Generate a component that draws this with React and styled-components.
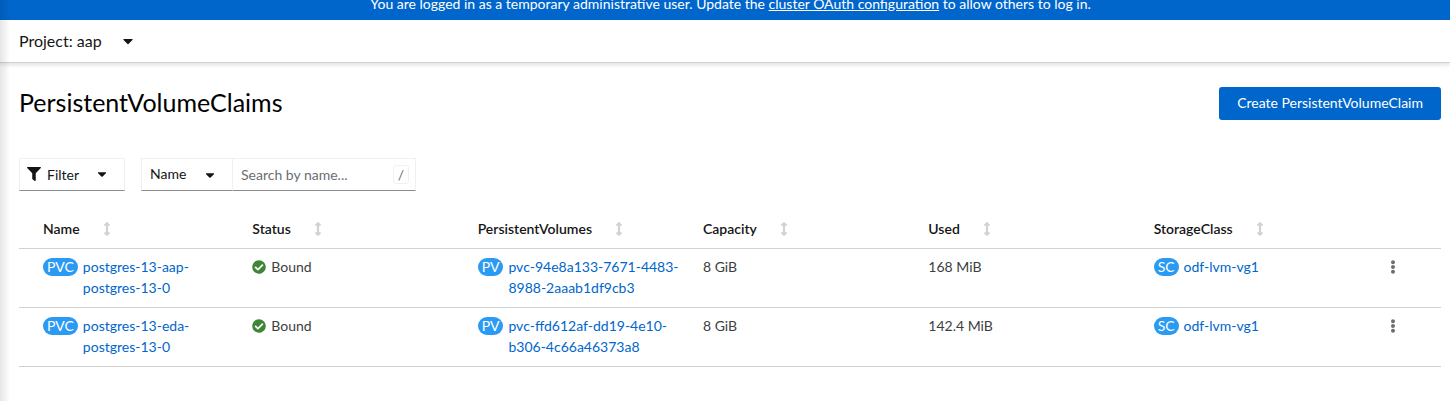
import styled, { createGlobalStyle } from "styled-components";
import {
  FaArrowsAltV,
  FaCaretDown,
  FaCheckCircle,
  FaEllipsisV,
  FaFilter,
} from "react-icons/fa";

const columns = [
  "Name",
  "Status",
  "PersistentVolumes",
  "Capacity",
  "Used",
  "StorageClass",
];

const claims = [
  {
    name: "postgres-13-aap-postgres-13-0",
    status: "Bound",
    volume: "pvc-94e8a133-7671-4483-8988-2aaab1df9cb3",
    capacity: "8 GiB",
    used: "168 MiB",
    storageClass: "odf-lvm-vg1",
  },
  {
    name: "postgres-13-eda-postgres-13-0",
    status: "Bound",
    volume: "pvc-ffd612af-dd19-4e10-b306-4c66a46373a8",
    capacity: "8 GiB",
    used: "142.4 MiB",
    storageClass: "odf-lvm-vg1",
  },
];

const ResourceLink = ({ kind, name }) => (
  <Resource>
    <Badge>{kind}</Badge>
    <a href="#">{name}</a>
  </Resource>
);

const ClaimRow = ({ claim }) => (
  <tr>
    <Td>
      <ResourceLink kind="PVC" name={claim.name} />
    </Td>
    <Td>
      <Status>
        <FaCheckCircle size={14} color="#3e8635" />
        {claim.status}
      </Status>
    </Td>
    <Td>
      <ResourceLink kind="PV" name={claim.volume} />
    </Td>
    <Td>{claim.capacity}</Td>
    <Td>{claim.used}</Td>
    <Td>
      <ResourceLink kind="SC" name={claim.storageClass} />
    </Td>
    <Td>
      <Kebab type="button" aria-label={`Actions for ${claim.name}`}>
        <FaEllipsisV size={14} />
      </Kebab>
    </Td>
  </tr>
);

const App = () => {
  return (
    <Page>
      <GlobalStyle />
      <Banner>
        <p>
          You are logged in as a temporary administrative user. Update the{" "}
          <a href="#">cluster OAuth configuration</a> to allow others to log in.
        </p>
      </Banner>
      <ProjectBar>
        <ProjectButton type="button">
          Project: aap
          <FaCaretDown size={16} />
        </ProjectButton>
      </ProjectBar>
      <Content>
        <Heading>
          <h1>PersistentVolumeClaims</h1>
          <CreateButton type="button">Create PersistentVolumeClaim</CreateButton>
        </Heading>
        <Toolbar>
          <FilterButton type="button">
            <FaFilter size={14} />
            <span>Filter</span>
            <FaCaretDown size={14} />
          </FilterButton>
          <SearchGroup>
            <SelectWrap>
              <select aria-label="Search attribute" defaultValue="Name">
                <option>Name</option>
                <option>Label</option>
              </select>
              <FaCaretDown size={14} />
            </SelectWrap>
            <SearchBox>
              <input
                type="text"
                aria-label="Search by name"
                placeholder="Search by name..."
              />
              <kbd>/</kbd>
            </SearchBox>
          </SearchGroup>
        </Toolbar>
        <Table>
          <thead>
            <tr>
              {columns.map((column) => (
                <Th key={column}>
                  <SortButton type="button">
                    {column}
                    <FaArrowsAltV size={14} color="#d2d2d2" />
                  </SortButton>
                </Th>
              ))}
              <ActionsTh aria-label="Actions" />
            </tr>
          </thead>
          <tbody>
            {claims.map((claim) => (
              <ClaimRow key={claim.name} claim={claim} />
            ))}
          </tbody>
        </Table>
      </Content>
    </Page>
  );
};

export default App;

const GlobalStyle = createGlobalStyle`
  * {
    box-sizing: border-box;
  }

  body {
    margin: 0;
    background: #fff;
    color: #151515;
    font-family: Lato, "Open Sans", sans-serif;
    font-size: 14px;
    line-height: 21px;
  }

  h1,
  p {
    margin: 0;
  }

  a {
    color: #06c;
    text-decoration: none;
  }

  button,
  input,
  select {
    margin: 0;
    padding: 0;
    border: 0;
    background: none;
    color: inherit;
    font: inherit;
  }

  svg {
    flex: none;
  }
`;

const Page = styled.div`
  position: relative;
  min-height: 100vh;

  &::before {
    content: "";
    position: absolute;
    top: 0;
    bottom: 0;
    left: 0;
    width: 10px;
    background: linear-gradient(to right, rgba(3, 3, 3, 0.1), transparent);
    pointer-events: none;
  }
`;

const Banner = styled.div`
  display: flex;
  align-items: flex-end;
  justify-content: center;
  height: 20px;
  padding: 0 0 6px 11px;
  overflow: hidden;
  background: #06c;
  color: #fff;
  white-space: nowrap;

  a {
    color: #fff;
    text-decoration: underline;
  }
`;

const ProjectBar = styled.div`
  display: flex;
  padding: 10px 19px 11px;
  border-bottom: 1px solid #d2d2d2;
  box-shadow: 0 2px 4px rgba(3, 3, 3, 0.12);
`;

const ProjectButton = styled.button`
  display: flex;
  align-items: center;
  gap: 18px;
  font-size: 16px;
`;

const Content = styled.main`
  padding: 24px 9px 0 19px;
`;

const Heading = styled.div`
  display: flex;
  align-items: flex-start;
  justify-content: space-between;

  h1 {
    color: #000;
    font-size: 25px;
    font-weight: 400;
    line-height: 31px;
  }
`;

const CreateButton = styled.button`
  padding: 5px 18px 7px;
  border-radius: 3px;
  background: #06c;
  color: #fff;
`;

const Toolbar = styled.div`
  display: flex;
  gap: 16px;
  margin-top: 38px;
`;

const FilterButton = styled.button`
  display: flex;
  align-items: center;
  width: 106px;
  height: 33px;
  padding: 0 7px 1px;
  border: 1px solid #f0f0f0;
  border-bottom-color: #8a8d90;

  span {
    margin: 0 16px 0 6px;
  }
`;

const SearchGroup = styled.div`
  display: flex;
`;

const SelectWrap = styled.div`
  display: grid;
  align-items: center;
  width: 91px;
  border: 1px solid #f0f0f0;
  border-right: 0;
  border-bottom-color: #8a8d90;

  select,
  svg {
    grid-area: 1 / 1;
  }

  select {
    padding: 4px 8px 6px;
    appearance: none;
  }

  svg {
    justify-self: end;
    margin-right: 15px;
    pointer-events: none;
  }
`;

const SearchBox = styled.div`
  display: flex;
  align-items: center;
  width: 184px;
  height: 33px;
  padding: 0 6px 1px 8px;
  border: 1px solid #f0f0f0;
  border-bottom-color: #8a8d90;

  input {
    flex: 1;
    min-width: 0;
    outline: none;
  }

  input::placeholder {
    color: #6a6e73;
  }

  kbd {
    padding: 0 4px;
    border: 1px solid #f0f0f0;
    border-radius: 3px;
    color: #6a6e73;
    font-family: inherit;
    line-height: 17px;
  }
`;

const Table = styled.table`
  width: 100%;
  margin-top: 20px;
  border-collapse: collapse;
  table-layout: fixed;
`;

const Th = styled.th`
  padding: 7px 8px 9px;
  border-bottom: 1px solid #d2d2d2;
  font-weight: 600;
  text-align: left;

  &:first-child {
    padding-left: 24px;
  }
`;

const ActionsTh = styled(Th)`
  width: 70px;
`;

const SortButton = styled.button`
  display: flex;
  align-items: center;
  gap: 20px;
`;

const Td = styled.td`
  padding: 7px 8px 9px;
  border-bottom: 1px solid #d2d2d2;
  color: #3c3f42;
  vertical-align: top;

  &:first-child {
    padding-left: 24px;
  }
`;

const Resource = styled.div`
  display: flex;
  align-items: flex-start;
  gap: 5px;
`;

const Badge = styled.span`
  flex: none;
  margin-top: 2px;
  padding: 0 4px;
  border-radius: 9px;
  background: #2b9af3;
  color: #fff;
  line-height: 18px;
`;

const Status = styled.span`
  display: flex;
  align-items: center;
  gap: 5px;
`;

const Kebab = styled.button`
  display: flex;
  align-items: center;
  height: 21px;
  padding: 0 7px;
  color: #6a6e73;
`;
